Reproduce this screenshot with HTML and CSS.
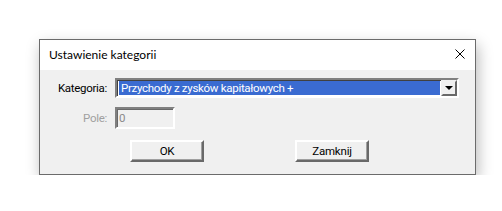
FILE: index.html
```html
<!DOCTYPE html>
<html lang="pl">
<head>
    <meta charset="UTF-8">
    <title>Ustawienie kategorii</title>
    <link rel="stylesheet" href="styles.css">
</head>
<body>
    <div class="dialog">
        <div class="titlebar">
            <span class="title">Ustawienie kategorii</span>
            <svg class="close" width="10" height="10" viewBox="0 0 10 10">
                <path d="M0.5 0.5 L9.5 9.5 M9.5 0.5 L0.5 9.5" stroke="#000" stroke-width="1" fill="none"/>
            </svg>
        </div>
        <div class="content">
            <div class="form">
                <label class="label">Kategoria:</label>
                <div class="combo">
                    <div class="combo-value">Przychody z zysków kapitałowych +</div>
                    <div class="combo-button"><span class="arrow"></span></div>
                </div>

                <label class="label disabled">Pole:</label>
                <input type="text" class="field" value="0" disabled />
            </div>
            <div class="buttons">
                <button type="button" class="btn ok">OK</button>
                <button type="button" class="btn close-btn">Zamknij</button>
            </div>
        </div>
    </div>
</body>
</html>
```

FILE: styles.css
```css
body {
    margin: 0;
    background-color: #ffffff;
    padding: 39px 0 0 39px;
    font-family: Roboto, "Liberation Sans", Arial, sans-serif;
}

.dialog {
    width: 435px;
    height: 134px;
    border: 1px solid #6b6b6b;
    background-color: #f0f0f0;
    box-shadow: 2px 6px 14px rgba(0, 0, 0, 0.28);
    display: flex;
    flex-direction: column;
}

.titlebar {
    height: 30px;
    background-color: #ffffff;
    display: flex;
    align-items: center;
    justify-content: space-between;
    padding: 0 10px 0 9px;
}

.title {
    font-family: Lato, "Noto Sans", sans-serif;
    font-size: 12px;
    color: #000000;
    position: relative;
    top: -1px;
}

.close {
    display: block;
    margin-top: -2px;
}

.content {
    padding: 8px 15px 0 0;
}

.form {
    display: grid;
    grid-template-columns: 67px 344px;
    column-gap: 8px;
    row-gap: 9px;
    align-items: center;
}

.label {
    text-align: right;
    font-size: 11.5px;
    letter-spacing: -0.3px;
    color: #000000;
}

.label.disabled {
    color: #a0a0a0;
}

.combo {
    height: 20px;
    box-sizing: border-box;
    border: 2px solid;
    border-color: #808080 #ffffff #ffffff #808080;
    background-color: #ffffff;
    display: flex;
    padding: 1px;
    box-shadow: inset 1px 1px 0 #404040;
}

.combo-value {
    flex: 1;
    background-color: #3a6bd1;
    color: #ffffff;
    font-size: 11.5px;
    letter-spacing: -0.3px;
    line-height: 14px;
    padding-left: 2px;
    margin: 0 1px 0 1px;
}

.combo-button {
    width: 16px;
    box-sizing: border-box;
    border: 2px solid;
    border-color: #f0f0f0 #696969 #696969 #f0f0f0;
    background-color: #f0f0f0;
    display: flex;
    align-items: center;
    justify-content: center;
    margin: -1px -1px -1px 0;
}

.arrow {
    width: 0;
    height: 0;
    border-left: 4px solid transparent;
    border-right: 4px solid transparent;
    border-top: 4px solid #000000;
}

.field {
    width: 60px;
    height: 22px;
    box-sizing: border-box;
    border: 2px solid;
    border-color: #808080 #ffffff #ffffff #808080;
    box-shadow: inset 1px 1px 0 #696969;
    background-color: #f0f0f0;
    color: #8a8a8a;
    font-family: Roboto, "Liberation Sans", Arial, sans-serif;
    font-size: 11.5px;
    padding: 1px 2px;
    margin: 0;
}

.buttons {
    display: flex;
    gap: 91px;
    padding-left: 90px;
    margin-top: 11px;
}

.btn {
    width: 74px;
    height: 22px;
    box-sizing: border-box;
    border: 2px solid;
    border-color: #ffffff #696969 #696969 #ffffff;
    background-color: #f0f0f0;
    box-shadow: inset -1px -1px 0 #a0a0a0;
    font-family: Roboto, "Liberation Sans", Arial, sans-serif;
    font-size: 11.5px;
    letter-spacing: -0.2px;
    color: #000000;
    padding: 0;
    outline: none;
}
```
